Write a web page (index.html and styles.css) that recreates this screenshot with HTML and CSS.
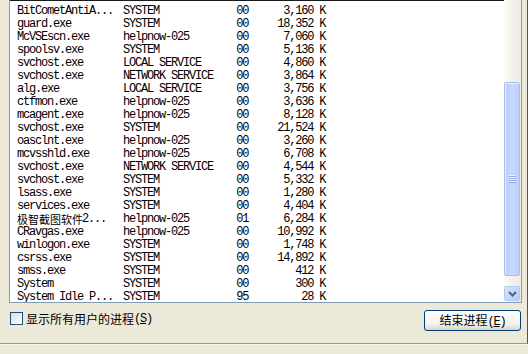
FILE: index.html
```html
<!DOCTYPE html>
<html lang="zh-CN">
<head>
    <meta charset="UTF-8">
    <title>Windows 任务管理器 - 进程</title>
    <link rel="stylesheet" href="styles.css">
</head>
<body>
    <div class="panel">
        <div class="list">
            <div class="rows" id="procList"></div>
            <div class="scrollbar">
                <div class="track-top"></div>
                <div class="thumb"><span class="grip"></span></div>
                <div class="track-gap"></div>
                <div class="arrow-btn">
                    <svg width="9" height="6" viewBox="0 0 9 6"><polyline points="1,1 4.5,4.5 8,1" fill="none" stroke="#4D6185" stroke-width="2"/></svg>
                </div>
            </div>
        </div>
        <div class="actions">
            <label class="show-all"><span class="check"></span><span class="cjk">显示所有用户的进程</span><span class="key">(<u>S</u>)</span></label>
            <button class="btn"><span class="cjk">结束进程</span><span class="key">(<u>E</u>)</span></button>
        </div>
    </div>
    <script>
        const procs = [
            ["BitCometAntiA...", "SYSTEM", "00", "3,160 K"],
            ["guard.exe", "SYSTEM", "00", "18,352 K"],
            ["McVSEscn.exe", "helpnow-025", "00", "7,060 K"],
            ["spoolsv.exe", "SYSTEM", "00", "5,136 K"],
            ["svchost.exe", "LOCAL SERVICE", "00", "4,860 K"],
            ["svchost.exe", "NETWORK SERVICE", "00", "3,864 K"],
            ["alg.exe", "LOCAL SERVICE", "00", "3,756 K"],
            ["ctfmon.exe", "helpnow-025", "00", "3,636 K"],
            ["mcagent.exe", "helpnow-025", "00", "8,128 K"],
            ["svchost.exe", "SYSTEM", "00", "21,524 K"],
            ["oasclnt.exe", "helpnow-025", "00", "3,260 K"],
            ["mcvsshld.exe", "helpnow-025", "00", "6,708 K"],
            ["svchost.exe", "NETWORK SERVICE", "00", "4,544 K"],
            ["svchost.exe", "SYSTEM", "00", "5,332 K"],
            ["lsass.exe", "SYSTEM", "00", "1,280 K"],
            ["services.exe", "SYSTEM", "00", "4,404 K"],
            ["<span class='cjk-cell'>极智截图软件</span>2...", "helpnow-025", "01", "6,284 K"],
            ["CRavgas.exe", "helpnow-025", "00", "10,992 K"],
            ["winlogon.exe", "SYSTEM", "00", "1,748 K"],
            ["csrss.exe", "SYSTEM", "00", "14,892 K"],
            ["smss.exe", "SYSTEM", "00", "412 K"],
            ["System", "SYSTEM", "00", "300 K"],
            ["System Idle P...", "SYSTEM", "95", "28 K"]
        ];

        const list = document.getElementById("procList");
        procs.forEach(p => {
            const row = document.createElement("div");
            row.className = "row";
            row.innerHTML =
                "<span>" + p[0] + "</span>" +
                "<span>" + p[1] + "</span>" +
                "<span class='num'>" + p[2] + "</span>" +
                "<span class='num'>" + p[3] + "</span>";
            list.appendChild(row);
        });
    </script>
</body>
</html>
```
FILE: styles.css
```css
body {
    margin: 0;
    width: 528px;
    height: 354px;
    overflow: hidden;
    background-color: #ECE9D8;
    color: #000;
    font-family: "Liberation Mono", "DejaVu Sans Mono", monospace;
    font-size: 12px;
}
.cjk, .cjk-cell {
    font-family: "Noto Sans CJK SC", sans-serif;
    letter-spacing: 0;
}
.panel {
    box-sizing: border-box;
    height: 344px;
    padding: 0 5px 0 9px;
    border-right: 1px solid #555;
    border-bottom: 1px solid #919B9C;
    box-shadow: 0 1px 0 #F7F6EF;
}
/* process list */
.list {
    display: flex;
    box-sizing: border-box;
    height: 303px;
    border: 1px solid #7F9DB9;
    border-top: none;
    background-color: #fff;
}
.rows {
    flex: 1;
    overflow: hidden;
    border-top: 1px solid #1a1a1a;
    padding-top: 4px;
}
.row {
    display: grid;
    grid-template-columns: 106px 100px 24px 77px;
    height: 13px;
    line-height: 13px;
    padding-left: 7px;
    white-space: nowrap;
    letter-spacing: -1.2px;
}
.row .num {
    text-align: right;
    margin-right: -1.2px;
}
.cjk-cell {
    display: inline-block;
    height: 13px;
    font-size: 11px;
    line-height: 13px;
    vertical-align: top;
    margin-right: -1px;
}
/* scrollbar */
.scrollbar {
    display: flex;
    flex-direction: column;
    width: 17px;
    background: linear-gradient(to right, #FBFBF8, #F2F0E8 60%, #EEEDE5);
}
.track-top {
    height: 82px;
}
.thumb {
    box-sizing: border-box;
    height: 194px;
    margin-right: 1px;
    border: 1px solid #A9BEF0;
    border-radius: 2px;
    box-shadow: inset 1px 1px 0 #E6EEFE;
    background: linear-gradient(to right, #BACDF9, #C9D9FD 45%, #BCCFFA);
    display: flex;
    align-items: center;
    justify-content: center;
}
.grip {
    width: 7px;
    height: 8px;
    background: repeating-linear-gradient(#EEF4FE 0 1px, #8CA9E6 1px 2px);
}
.track-gap {
    height: 10px;
}
.arrow-btn {
    box-sizing: border-box;
    height: 15px;
    margin-right: 1px;
    border: 1px solid #B4C8F6;
    border-radius: 2px;
    background: linear-gradient(135deg, #D6E2FD, #B9CDF9);
    display: flex;
    align-items: center;
    justify-content: center;
}
/* bottom controls */
.actions {
    display: flex;
    justify-content: space-between;
    align-items: flex-start;
    margin-top: 7px;
    padding-right: 1px;
}
.show-all {
    display: flex;
    align-items: center;
    height: 15px;
    margin-top: 1px;
    margin-left: 1px;
    font-size: 12px;
}
.check {
    box-sizing: border-box;
    width: 13px;
    height: 13px;
    margin-right: 3px;
    border: 1px solid #1C5180;
    background: linear-gradient(135deg, #DCDCD7, #FFFFFF);
}
.key {
    letter-spacing: -1.2px;
}
.btn {
    box-sizing: border-box;
    width: 97px;
    height: 21px;
    padding: 0;
    border: 1px solid #003C74;
    border-radius: 3px;
    background: linear-gradient(#FFFFFF, #F3F2EC 70%, #D9D4C8);
    color: #000;
    font-family: "Liberation Mono", monospace;
    font-size: 12px;
    line-height: 18px;
}
```
